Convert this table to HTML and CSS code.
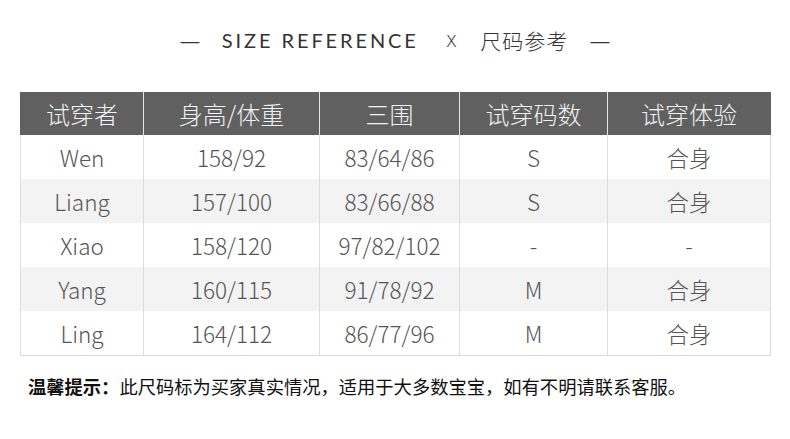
FILE: index.html
```html
<!DOCTYPE html>
<html lang="zh">
<head>
<meta charset="utf-8">
<link rel="stylesheet" href="styles.css">
</head>
<body>
<div class="page">
  <div class="title">
    <span class="dash">—</span>
    <span class="en">SIZE REFERENCE</span>
    <span class="x">X</span>
    <span class="cn">尺码参考</span>
    <span class="dash">—</span>
  </div>
  <table class="size">
    <colgroup>
      <col class="c1"><col class="c2"><col class="c3"><col class="c4"><col class="c5">
    </colgroup>
    <thead>
      <tr><th>试穿者</th><th>身高/体重</th><th>三围</th><th>试穿码数</th><th>试穿体验</th></tr>
    </thead>
    <tbody>
      <tr><td>Wen</td><td>158/92</td><td>83/64/86</td><td>S</td><td>合身</td></tr>
      <tr><td>Liang</td><td>157/100</td><td>83/66/88</td><td>S</td><td>合身</td></tr>
      <tr><td>Xiao</td><td>158/120</td><td>97/82/102</td><td>-</td><td>-</td></tr>
      <tr><td>Yang</td><td>160/115</td><td>91/78/92</td><td>M</td><td>合身</td></tr>
      <tr><td>Ling</td><td>164/112</td><td>86/77/96</td><td>M</td><td>合身</td></tr>
    </tbody>
  </table>
  <p class="note"><b>温馨提示：</b>此尺码标为买家真实情况，适用于大多数宝宝，如有不明请联系客服。</p>
</div>
</body>
</html>
```

FILE: styles.css
```css
html, body {
  margin: 0;
  padding: 0;
  background: #fff;
}
.page {
  width: 790px;
  height: 439px;
  padding-top: 25px;
  box-sizing: border-box;
  font-family: "Noto Sans CJK SC", "Noto Sans", sans-serif;
}
.title {
  display: flex;
  justify-content: center;
  align-items: center;
  height: 30px;
  color: #333;
  font-size: 20px;
  font-weight: 400;
}
.title .dash {
  color: #333;
  font-size: 18px;
  transform: scaleX(1.3);
}
.title .dash:first-child { margin-right: 24px; }
.title .dash:last-child { margin-left: 24px; }
.title .en {
  letter-spacing: 2.9px;
  font-family: "Lato", "Noto Sans", sans-serif;
  font-size: 20px;
}
.title .x {
  margin-left: 28px;
  margin-right: 24px;
  font-weight: 300;
  font-size: 17px;
  font-family: "Noto Sans", sans-serif;
}
.title .cn {
  font-weight: 300;
  font-size: 21px;
  letter-spacing: 1px;
}
.size {
  margin: 37px 0 0 20px;
  width: 750px;
  border-collapse: collapse;
  table-layout: fixed;
  font-weight: 300;
}
.c1 { width: 123px; }
.c2 { width: 176px; }
.c3 { width: 140px; }
.c4 { width: 148px; }
.c5 { width: 163px; }
.size th {
  height: 43px;
  padding: 0;
  background: #606060;
  color: #f2f2f2;
  font-size: 24px;
  font-weight: 300;
  border-left: 1px solid #e6e6e6;
}
.size th:first-child { border-left: 1px solid #606060; }
.size th:last-child { border-right: 1px solid #606060; }
.size td {
  height: 44px;
  padding: 0;
  text-align: center;
  color: #555;
  font-size: 22.5px;
  border-left: 1px solid #dcdcdc;
  border-right: 1px solid #dcdcdc;
}
.size tbody tr:nth-child(even) td { background: #f3f3f3; }
.size tbody tr:last-child td { border-bottom: 1px solid #dcdcdc; }
.note {
  margin: 17px 0 0 28px;
  font-size: 18.3px;
  color: #111;
  font-family: "Noto Sans CJK SC", sans-serif;
}
.note b { font-weight: 700; }
```
